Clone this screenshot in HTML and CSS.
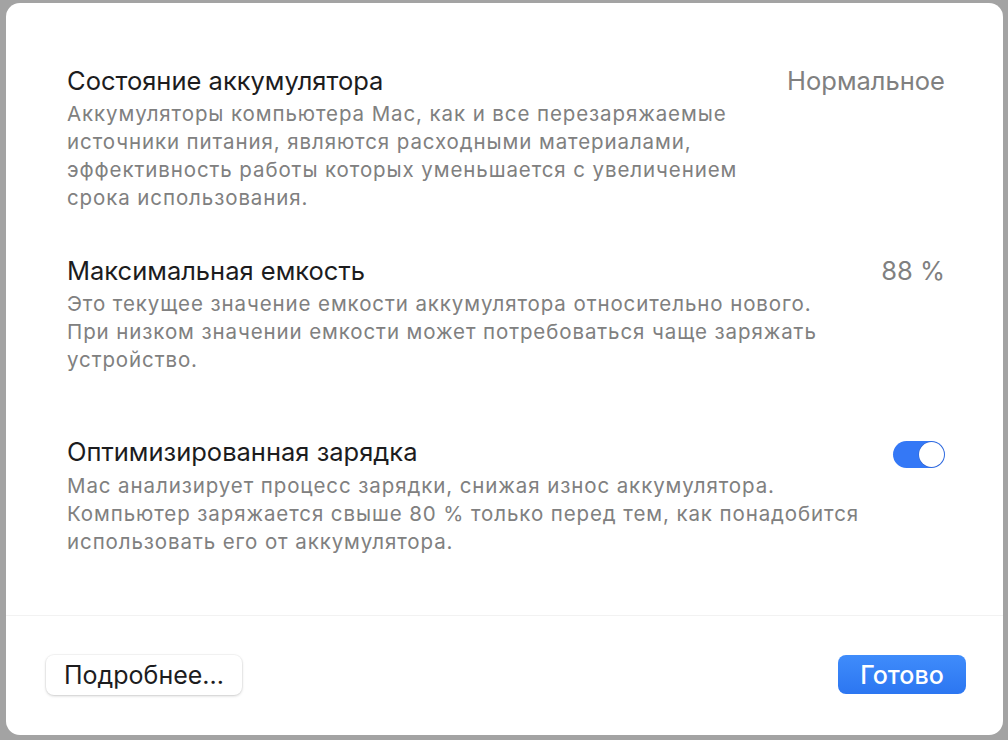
FILE: index.html
```html
<!DOCTYPE html>
<html lang="ru">
<head>
    <meta charset="UTF-8">
    <meta name="viewport" content="width=device-width, initial-scale=1.0">
    <title>Состояние аккумулятора</title>
    <link rel="stylesheet" href="styles.css">
</head>
<body>

<div class="window">
    <div class="content">
        <div class="section">
            <div class="row">
                <div class="title">Состояние аккумулятора</div>
                <div class="value">Нормальное</div>
            </div>
            <div class="desc">Аккумуляторы компьютера Mac, как и все перезаряжаемые<br>источники питания, являются расходными материалами,<br>эффективность работы которых уменьшается с увеличением<br>срока использования.</div>
        </div>

        <div class="section">
            <div class="row">
                <div class="title">Максимальная емкость</div>
                <div class="value">88 %</div>
            </div>
            <div class="desc">Это текущее значение емкости аккумулятора относительно нового.<br>При низком значении емкости может потребоваться чаще заряжать<br>устройство.</div>
        </div>

        <div class="section section-toggle">
            <div class="row">
                <div class="title">Оптимизированная зарядка</div>
                <div class="toggle"><span class="knob"></span></div>
            </div>
            <div class="desc">Mac анализирует процесс зарядки, снижая износ аккумулятора.<br>Компьютер заряжается свыше 80 % только перед тем, как понадобится<br>использовать его от аккумулятора.</div>
        </div>
    </div>

    <div class="footer">
        <button class="btn">Подробнее...</button>
        <button class="btn btn-primary">Готово</button>
    </div>
</div>

</body>
</html>
```

FILE: styles.css
```css
body {
    margin: 0;
    background-color: #a3a3a3;
    font-family: Inter, "Liberation Sans", Arial, sans-serif;
}
.window {
    margin: 3px 5px 0 6px;
    height: 732px;
    background-color: #fff;
    border-radius: 14px;
    display: flex;
    flex-direction: column;
    overflow: hidden;
}
.content {
    flex: 1;
    padding: 64px 58px 0 61px;
    border-bottom: 1px solid #f2f2f2;
}
.section {
    margin-bottom: 45px;
}
.section-toggle {
    margin-top: 64px;
}
.row {
    display: flex;
    justify-content: space-between;
    align-items: flex-start;
}
.title {
    font-size: 25.5px;
    line-height: 28px;
    color: #1c1c1e;
}
.value {
    font-size: 25.5px;
    line-height: 28px;
    color: #808080;
}
.desc {
    margin-top: 5px;
    font-size: 20.5px;
    line-height: 28px;
    color: #808080;
    letter-spacing: 0.9px;
}
.section-toggle .desc {
    margin-top: 4px;
}
.toggle {
    width: 52px;
    height: 27px;
    margin-top: 3px;
    border-radius: 14px;
    background-color: #3478f6;
    position: relative;
}
.knob {
    position: absolute;
    right: 1.5px;
    top: 1px;
    width: 25px;
    height: 25px;
    border-radius: 50%;
    background-color: #fff;
    box-shadow: 0 0 0 0.5px rgba(40, 60, 140, 0.4);
}
.footer {
    height: 119px;
    padding: 0 37px 0 40px;
    display: flex;
    justify-content: space-between;
    align-items: center;
}
.btn {
    width: 196px;
    height: 40px;
    padding: 0;
    border: none;
    border-radius: 8px;
    background-color: #fff;
    font-family: inherit;
    font-size: 25px;
    color: #1c1c1e;
    box-shadow: 0 0 0 1px rgba(0, 0, 0, 0.03), 0 1px 3px rgba(0, 0, 0, 0.18);
    margin-top: -2px;
}
.btn-primary {
    width: 128px;
    height: 39px;
    background: linear-gradient(#3f8cfb, #2c76f1);
    color: #fff;
    font-weight: 500;
    box-shadow: none;
}
```
